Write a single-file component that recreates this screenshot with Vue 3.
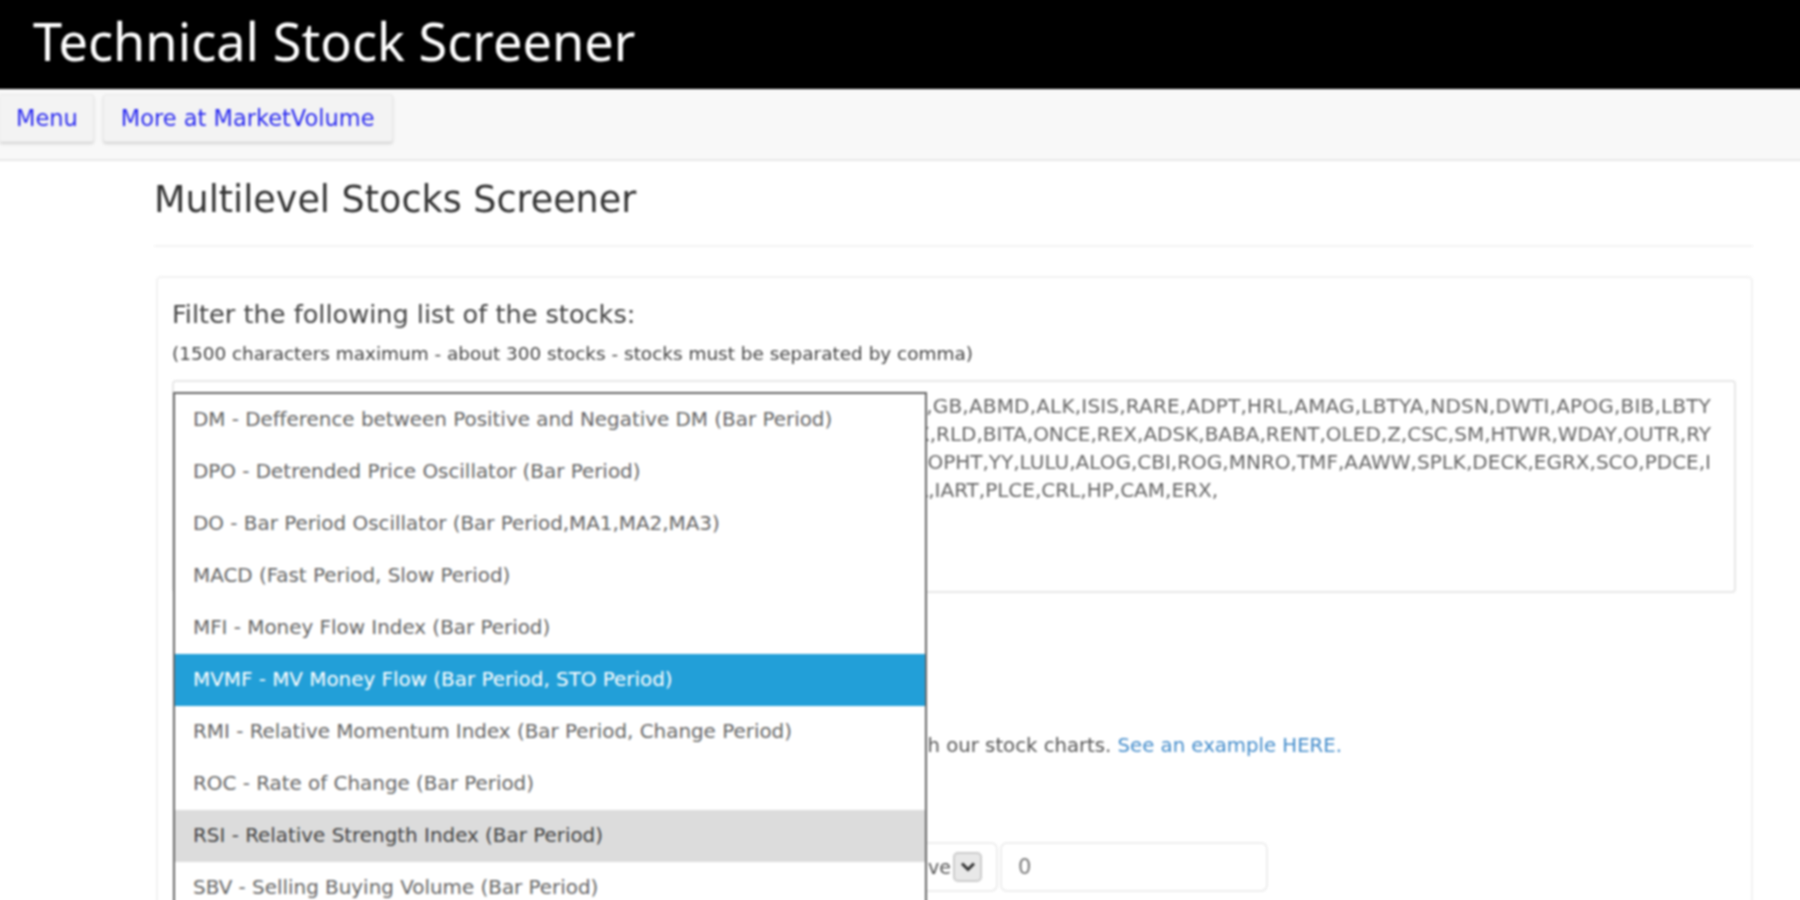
<script setup>
const options = [
  { label: 'DM - Defference between Positive and Negative DM (Bar Period)' },
  { label: 'DPO - Detrended Price Oscillator (Bar Period)' },
  { label: 'DO - Bar Period Oscillator (Bar Period,MA1,MA2,MA3)' },
  { label: 'MACD (Fast Period, Slow Period)' },
  { label: 'MFI - Money Flow Index (Bar Period)' },
  { label: 'MVMF - MV Money Flow (Bar Period, STO Period)', state: 'selected' },
  { label: 'RMI - Relative Momentum Index (Bar Period, Change Period)' },
  { label: 'ROC - Rate of Change (Bar Period)' },
  { label: 'RSI - Relative Strength Index (Bar Period)', state: 'hover' },
  { label: 'SBV - Selling Buying Volume (Bar Period)' }
]
const tickers = [
  'AAPL,TSLA,NFLX,GOOG,AMZN,PCLN,BIDU,WYNN,CMG,ISRG,GB,ABMD,ALK,ISIS,RARE,ADPT,HRL,AMAG,LBTYA,NDSN,DWTI,APOG,BIB,LBTY',
  'CELG,REGN,BIIB,ALXN,GILD,VRTX,ILMN,MNST,LVS,SBUX,RLD,BITA,ONCE,REX,ADSK,BABA,RENT,OLED,Z,CSC,SM,HTWR,WDAY,OUTR,RY',
  'ULTA,ORLY,AZO,COST,FFIV,PANW,NOW,TWTR,FB,LNKD,SOPHT,YY,LULU,ALOG,CBI,ROG,MNRO,TMF,AAWW,SPLK,DECK,EGRX,SCO,PDCE,I',
  'SWKS,AVGO,SKX,ANET,GPRO,KORS,COH,FOSL,UA,LL,IART,PLCE,CRL,HP,CAM,ERX,'
]
</script>

<template>
  <div class="page">
    <header class="masthead">Technical Stock Screener</header>
    <nav class="navbar">
      <a class="nav-btn menu">Menu</a>
      <a class="nav-btn">More at MarketVolume</a>
    </nav>
    <main class="content">
      <h1 class="title">Multilevel Stocks Screener</h1>
      <hr class="rule" />
      <section class="panel">
        <p class="label">Filter the following list of the stocks:</p>
        <p class="hint">(1500 characters maximum - about 300 stocks - stocks must be separated by comma)</p>
        <div class="tickers">
          <div v-for="(line, i) in tickers" :key="i" class="ticker-line" :class="{ first: i === 0, last: i === 3 }">{{ line }}</div>
        </div>
        <p class="note">
          Each of the technical indicators can be plotted with our stock charts.
          <a class="link">See an example HERE.</a>
        </p>
        <div class="filter-row">
          <div class="select-box">
            <span>Positive</span>
            <span class="caret">
              <svg width="18" height="12" viewBox="0 0 18 12"><path d="M3 2.5 L9 8.5 L15 2.5" fill="none" stroke="#333" stroke-width="3" /></svg>
            </span>
          </div>
          <div class="value-box">0</div>
        </div>
        <ul class="dropdown">
          <li v-for="o in options" :key="o.label" class="option" :class="o.state">{{ o.label }}</li>
        </ul>
      </section>
    </main>
  </div>
</template>

<style>
html, body { margin: 0; height: 900px; overflow: hidden; background: #fff; }
</style>

<style scoped>
.page {
  width: 1800px;
  height: 900px;
  margin: -6px;
  padding: 6px;
  overflow: hidden;
  filter: blur(0.9px);
  font-family: "DejaVu Sans", sans-serif;
  color: #555;
}
.masthead {
  height: 95px;
  margin: -6px -6px 0;
  box-sizing: border-box;
  padding: 6px 0 0 39px;
  background: #000;
  color: #fff;
  font-family: "Noto Sans", sans-serif;
  font-size: 52.3px;
  line-height: 81px;
}
.navbar {
  height: 72px;
  margin: 0 -6px;
  box-sizing: border-box;
  display: flex;
  gap: 9px;
  padding: 5px 0 0 6px;
  background: #f8f8f8;
  border-bottom: 2px solid #e8e8e8;
}
.nav-btn {
  height: 48px;
  box-sizing: border-box;
  padding: 0 17px;
  display: flex;
  align-items: center;
  background: #f3f3f3;
  border: 1px solid #eaeaea;
  border-radius: 3px;
  box-shadow: 0 2px 3px rgba(0,0,0,.14);
  color: #2a2af0;
  font-size: 22.5px;
}
.menu { padding: 0 15px 0 16px; border-left: 0; border-radius: 0 3px 3px 0; }
.content { padding: 0 47px 0 154px; }
.title {
  margin: 0;
  padding-top: 17px;
  font-size: 36.5px;
  line-height: 44px;
  font-weight: 400;
  color: #333;
}
.rule { margin: 23px 0 29px; border: 0; border-top: 2px solid #f4f4f4; }
.panel {
  position: relative;
  margin-left: 2px;
  padding: 20px 15px 0 14px;
  height: 700px;
  box-sizing: border-box;
  border: 2px solid #f2f2f2;
  border-radius: 5px;
}
.label { margin: 0; font-size: 25.6px; line-height: 32px; color: #444; }
.hint { margin: 11px 0 0; font-size: 18.45px; line-height: 26px; color: #444; }
.tickers {
  margin-top: 13px;
  height: 213px;
  box-sizing: border-box;
  padding: 10px 23px 0 20px;
  border: 2px solid #e8e8e8;
  border-radius: 4px;
  overflow: hidden;
  font-size: 20px;
  line-height: 28px;
  color: #666;
}
.ticker-line { white-space: nowrap; display: flex; justify-content: flex-end; }
.ticker-line.first { letter-spacing: 0.19px; }
.ticker-line.last { padding-right: 493px; }
.note {
  margin: 139px 0 0;
  width: 1200px;
  text-align: right;
  padding-right: 30px;
  box-sizing: border-box;
  white-space: nowrap;
  font-size: 19.7px;
  line-height: 28px;
  color: #555;
}
.link { color: #428bca; }
.filter-row { display: flex; gap: 2px; margin-top: 82px; justify-content: flex-start; padding-left: 499px; }
.select-box {
  width: 327px;
  height: 50px;
  box-sizing: border-box;
  display: flex;
  align-items: center;
  justify-content: flex-end;
  gap: 2px;
  padding-right: 14px;
  border: 2px solid #eee;
  border-radius: 7px;
  font-size: 19px;
}
.caret {
  width: 29px;
  height: 30px;
  display: flex;
  align-items: center;
  justify-content: center;
  box-sizing: border-box;
  background: #e8e8e8;
  border: 2px solid #ccc;
  border-radius: 5px;
}
.value-box {
  width: 268px;
  height: 50px;
  box-sizing: border-box;
  padding-left: 16px;
  display: flex;
  align-items: center;
  border: 2px solid #eee;
  border-radius: 7px;
  font-size: 21px;
  color: #777;
}
.dropdown {
  position: absolute;
  left: 15px;
  top: 114px;
  width: 754px;
  margin: 0;
  padding: 0;
  list-style: none;
  box-sizing: border-box;
  background: #fff;
  border: 2px solid #666;
  border-bottom: 0;
}
.option {
  height: 52px;
  box-sizing: border-box;
  display: flex;
  align-items: center;
  padding: 0 0 2px 18px;
  font-size: 19.9px;
  color: #666;
}
.option.selected { background: #229fd8; color: #fff; }
.option.hover { background: #dcdcdc; color: #444; }
</style>
